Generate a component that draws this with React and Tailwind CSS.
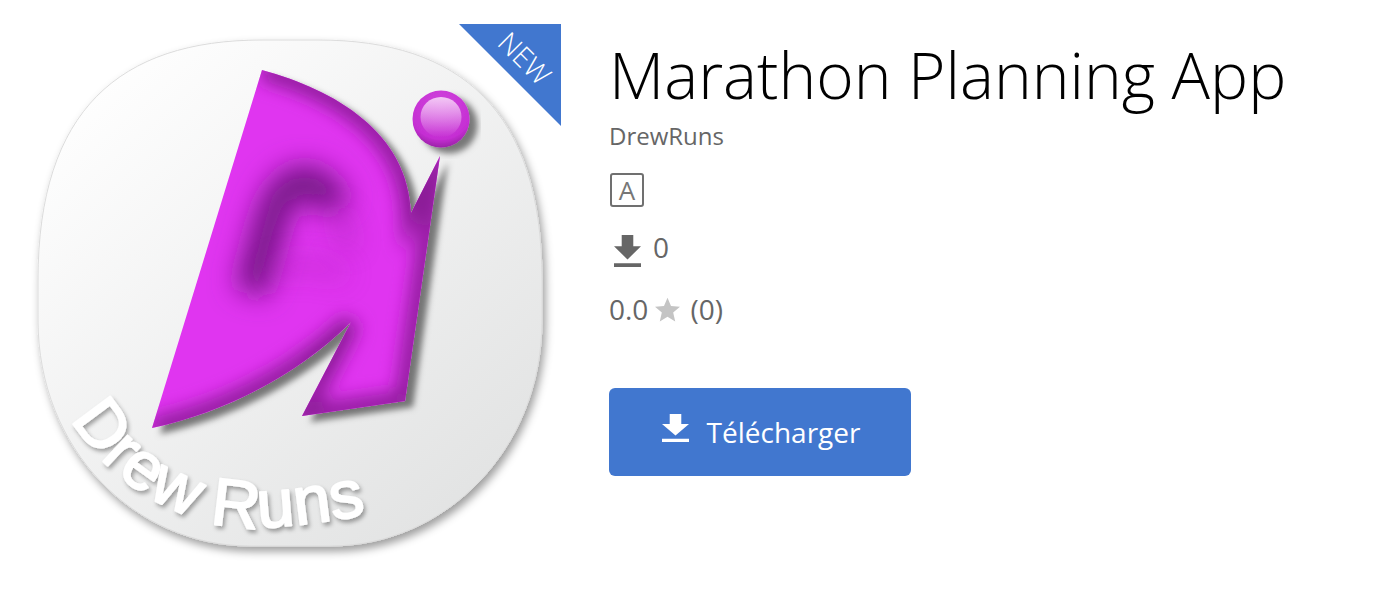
const SHAPE = 'M262 70 C335 90 408 132 411 213 L440 156 L405 401 L302 416 L351 322 C305 368 235 410 152 428 Z';
const DOWNLOAD = 'M19 9h-4V3H9v6H5l7 7 7-7zM5 18v2h14v-2H5z';

function DownloadIcon({ className }) {
  return (
    <svg viewBox="5 3 14 17" preserveAspectRatio="none" className={className} fill="currentColor">
      <path d={DOWNLOAD} />
    </svg>
  );
}

function Logo() {
  return (
    <svg viewBox="24 24 537 537" className="w-[537px] h-[537px] block">
      <defs>
        <linearGradient id="plate" x1="0.1" y1="0.05" x2="0.9" y2="0.95">
          <stop offset="0" stopColor="#ffffff" />
          <stop offset="1" stopColor="#e1e2e2" />
        </linearGradient>
        <radialGradient id="ball" cx="0.5" cy="0.28" r="0.82">
          <stop offset="0" stopColor="#d045dc" />
          <stop offset="0.7" stopColor="#c52ed3" />
          <stop offset="1" stopColor="#7f1a8b" />
        </radialGradient>
        <linearGradient id="ballShine" x1="0" y1="0" x2="0" y2="1">
          <stop offset="0" stopColor="#f3c8f5" />
          <stop offset="1" stopColor="#f3c8f5" stopOpacity="0" />
        </linearGradient>
        <filter id="plateShadow" x="-10%" y="-10%" width="120%" height="120%">
          <feDropShadow dx="3" dy="5" stdDeviation="4" floodColor="#000" floodOpacity="0.38" />
        </filter>
        <filter id="shapeShadow" x="-20%" y="-20%" width="140%" height="140%">
          <feDropShadow dx="8" dy="6" stdDeviation="3" floodColor="#000" floodOpacity="0.5" />
        </filter>
        <filter id="textShadow" x="-10%" y="-10%" width="120%" height="120%">
          <feDropShadow dx="2" dy="3" stdDeviation="2" floodColor="#000" floodOpacity="0.35" />
        </filter>
        <filter id="blurEdge" filterUnits="userSpaceOnUse" x="24" y="24" width="537" height="537">
          <feGaussianBlur stdDeviation="9" />
        </filter>
        <filter id="blurInner" filterUnits="userSpaceOnUse" x="24" y="24" width="537" height="537">
          <feGaussianBlur stdDeviation="14" />
        </filter>
        <clipPath id="shapeClip"><path d={SHAPE} /></clipPath>
      </defs>

      <path
        d="M38 280 C38 110 120 40 262 40 L318 40 C460 40 542 110 542 280 L542 320 C542 450 445 546 330 546 L250 546 C135 546 38 450 38 320 Z"
        fill="url(#plate)"
        stroke="#dcdcdc"
        strokeWidth="1"
        filter="url(#plateShadow)"
      />

      <g filter="url(#shapeShadow)">
        <path d={SHAPE} fill="#e036f0" />
      </g>
      <g clipPath="url(#shapeClip)">
        <path d="M262 70 C335 90 408 132 411 213 L440 156 L405 401 L302 416 L351 322 C305 368 235 410 152 428" fill="none" stroke="#8c1f98" strokeWidth="20" filter="url(#blurEdge)" />
        <path d="M250 292 C268 245 270 188 300 182 C318 180 328 192 335 208" fill="none" stroke="#6f1580" strokeWidth="32" filter="url(#blurInner)" />
        <path d="M335 208 C342 222 346 235 350 250" fill="none" stroke="#8c1f98" strokeWidth="14" opacity="0.45" filter="url(#blurInner)" />
        <path d="M270 272 C295 262 320 264 345 276" fill="none" stroke="#a827b4" strokeWidth="10" opacity="0.6" filter="url(#blurInner)" />
      </g>

      <g filter="url(#shapeShadow)">
        <circle cx="441" cy="119" r="28.5" fill="url(#ball)" />
      </g>
      <ellipse cx="441" cy="117" rx="20.5" ry="20" fill="url(#ballShine)" />

      <path id="brand" d="M62 400 C95 480 190 535 270 527 C310 524 340 520 385 510" fill="none" />
      <text fontFamily="Liberation Sans, sans-serif" fontSize="67" letterSpacing="0.5" fill="#ffffff" stroke="#ffffff" strokeWidth="2" strokeLinejoin="round" filter="url(#textShadow)">
        <textPath href="#brand" startOffset="21">Drew Runs</textPath>
      </text>
    </svg>
  );
}

export default function App() {
  return (
    <div className="w-[1378px] h-[590px] bg-white font-['Open_Sans',sans-serif] pt-[24px] pl-[24px] flex overflow-hidden">
      <div className="relative w-[537px] h-[537px] shrink-0">
        <Logo />
        {/* New ribbon */}
        <div className="absolute top-0 right-0 w-[102px] h-[102px] bg-[#4177cf] [clip-path:polygon(0_0,100%_0,100%_100%)]">
          <span className="absolute top-[19px] left-[36px] rotate-45 text-white text-[28px] leading-[30px] font-light">NEW</span>
        </div>
      </div>

      <div className="ml-[48px] flex flex-col items-start">
        <h1 className="text-[64px] leading-[88px] font-light text-black mt-[7px] whitespace-nowrap">Marathon Planning App</h1>
        <div className="text-[24px] leading-[32px] text-[#666666] mt-[1px]">DrewRuns</div>

        <div className="w-[34px] h-[34px] mt-[21px] ml-[1px] border-2 border-[#707070] rounded-[3px] flex items-center justify-center text-[#777777] text-[26px] leading-none">A</div>

        <div className="flex items-center mt-[24px] text-[#666666]">
          <DownloadIcon className="w-[27px] h-[32px] ml-[5px]" />
          <span className="text-[28px] leading-[32px] ml-[12px] mb-[8px]">0</span>
        </div>

        <div className="flex items-center mt-[22px] text-[28px] leading-[32px] text-[#666666]">
          <span>0.0</span>
          <svg viewBox="2 2 20 19" className="w-[25px] h-[25px] ml-[7px] text-[#c4c4c4]" fill="currentColor">
            <path d="M12 17.27L18.18 21l-1.64-7.03L22 9.24l-7.19-.61L12 2 9.19 8.63 2 9.24l5.46 4.73L5.82 21z" />
          </svg>
          <span className="ml-[10px]">(0)</span>
        </div>

        <button className="w-[302px] h-[88px] mt-[63px] bg-[#4177cf] rounded-[6px] text-white flex items-center justify-center pl-[2px]">
          <DownloadIcon className="w-[27px] h-[28px] -mt-[8px]" />
          <span className="text-[28px] leading-[38px] ml-[18px]">Télécharger</span>
        </button>
      </div>
    </div>
  );
}
